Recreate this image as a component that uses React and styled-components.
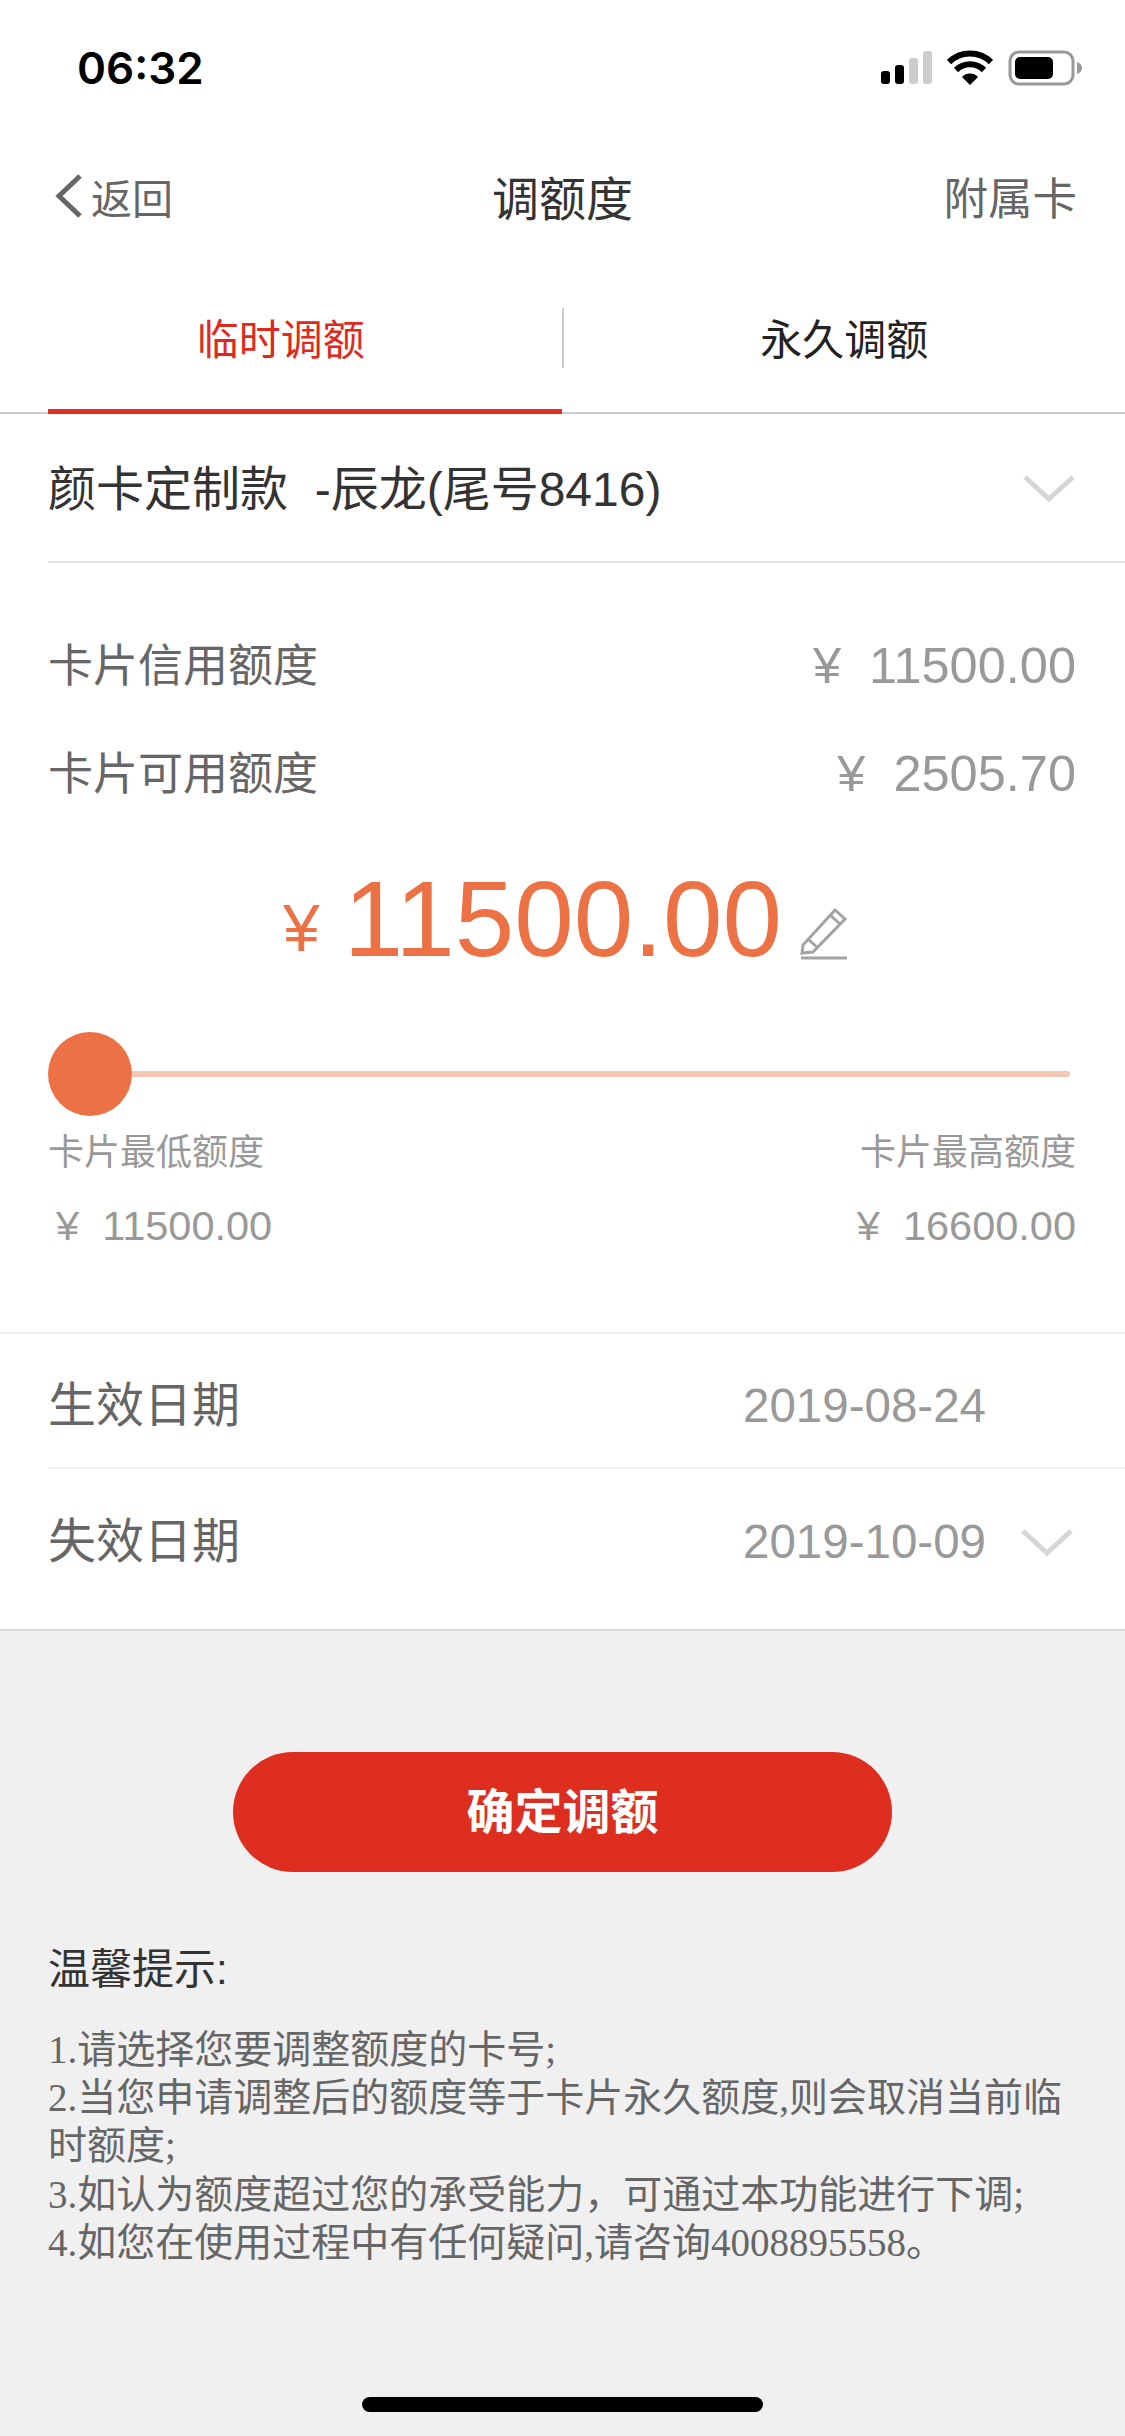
import styled, { createGlobalStyle } from "styled-components";

const Global = createGlobalStyle`
  html, body { margin: 0; padding: 0; background: #f0f0f0; }
  * { box-sizing: border-box; }
  body { font-family: "Liberation Sans", "Noto Sans CJK SC", sans-serif; }
`;

const Page = styled.div`
  width: 1125px;
  height: 2436px;
  position: relative;
  overflow: hidden;
  background: #f0f0f0;
`;
const White = styled.div`
  background: #fff;
  border-bottom: 2px solid #d9d9d9;
`;
const StatusBar = styled.div`
  height: 136px;
  padding: 0 42px 0 77px;
  display: flex;
  align-items: center;
  justify-content: space-between;
`;
const Time = styled.div`
  font-family: "Inter", sans-serif;
  font-weight: 600;
  font-size: 44px;
  color: #000;
`;
const NavBar = styled.div`
  height: 124px;
  padding: 0 48px 5px;
  display: grid;
  grid-template-columns: 1fr auto 1fr;
  align-items: center;
`;
const Back = styled.div`
  display: flex;
  align-items: center;
  gap: 9px;
  padding-left: 7px;
  font-size: 41px;
  color: #666;
`;
const NavTitle = styled.div`
  font-size: 47px;
  color: #333;
`;
const NavAction = styled.div`
  font-size: 44.5px;
  color: #666;
  text-align: right;
`;
const Tabs = styled.div`
  height: 154px;
  display: flex;
  border-bottom: 2px solid #ccc;
`;
const Tab = styled.div`
  position: relative;
  flex: 1;
  display: flex;
  align-items: center;
  justify-content: center;
  font-size: 42px;
  color: ${(p) => (p.$active ? "#e0281d" : "#222")};
  &::after {
    content: "";
    display: ${(p) => (p.$active ? "block" : "none")};
    position: absolute;
    left: 48px;
    right: 0;
    bottom: -2px;
    height: 5px;
    background: #df2f20;
  }
`;
const TabDivider = styled.div`
  width: 2px;
  height: 60px;
  margin-top: 48px;
  background: #ccc;
`;
const CardRow = styled.div`
  height: 149px;
  margin-left: 48px;
  padding-right: 50px;
  display: flex;
  align-items: center;
  justify-content: space-between;
  border-bottom: 2px solid #e3e3e3;
`;
const CardName = styled.div`
  font-size: 48px;
  margin-bottom: 6px;
  color: #333;
  white-space: pre;
`;
const Info = styled.div`
  padding: 48px 49px 0 48px;
`;
const InfoRow = styled.div`
  height: 108px;
  display: flex;
  align-items: center;
  justify-content: space-between;
`;
const InfoLabel = styled.div`
  font-size: 45px;
  margin-bottom: 6px;
  color: #666;
`;
const InfoValue = styled.div`
  font-size: 50.5px;
  color: #999;
  white-space: pre;
`;
const AmountRow = styled.div`
  height: 150px;
  margin-top: 17px;
  padding-left: 6px;
  display: flex;
  align-items: center;
  justify-content: center;
  color: #ec7144;
`;
const Yen = styled.span`
  font-size: 66px;
  margin: 18px 24px 0 0;
`;
const AmountValue = styled.span`
  font-size: 107px;
`;
const EditIcon = styled.svg`
  margin: 28px 0 0 18px;
`;
const Slider = styled.div`
  margin: 38px 55px 0 48px;
  height: 84px;
  display: flex;
  align-items: center;
`;
const Thumb = styled.div`
  width: 84px;
  height: 84px;
  border-radius: 50%;
  background: #ec7144;
  flex: none;
`;
const Track = styled.div`
  flex: 1;
  height: 6px;
  border-radius: 0 3px 3px 0;
  background: #f6c6b4;
`;
const Limits = styled.div`
  padding: 0 49px 0 48px;
  display: grid;
  grid-template-columns: 1fr 1fr;
  height: 218px;
  margin-top: -2px;
  grid-template-rows: 70px 84px;
  align-items: center;
  align-content: start;
`;
const LimitLabel = styled.div`
  font-size: 36px;
  color: #999;
  text-align: ${(p) => (p.$right ? "right" : "left")};
`;
const LimitValue = styled.div`
  font-size: 41.5px;
  color: #999;
  white-space: pre;
  text-align: ${(p) => (p.$right ? "right" : "left")};
  padding-left: ${(p) => (p.$right ? "0" : "8px")};
`;
const DateBlock = styled.div`
  border-top: 2px solid #efefef;
`;
const DateRow = styled.div`
  margin-left: 48px;
  height: ${(p) => p.$h}px;
  padding: ${(p) => p.$pad}px 52px 0 0;
  display: flex;
  align-items: ${(p) => (p.$last ? "flex-start" : "center")};
  border-bottom: ${(p) => (p.$last ? "none" : "2px solid #efefef")};
`;
const DateLabel = styled.div`
  flex: 1;
  font-size: 48px;
  line-height: 60px;
  color: #666;
`;
const DateValue = styled.div`
  font-size: 47.5px;
  line-height: 60px;
  color: #999;
  width: 245px;
  margin-right: 37px;
  white-space: nowrap;
`;
const ChevronSlot = styled.div`
  width: 48px;
  height: 60px;
  display: flex;
  align-items: center;
  justify-content: flex-end;
`;
const Footer = styled.div`
  padding: 121px 48px 0;
`;
const Confirm = styled.button`
  display: block;
  width: 659px;
  height: 120px;
  margin: 0 auto;
  padding: 0 0 9px;
  border: none;
  border-radius: 60px;
  background: #dd2e1f;
  color: #fff;
  font-family: inherit;
  font-size: 48px;
  font-weight: 700;
`;
const TipTitle = styled.div`
  margin-top: 68px;
  font-size: 42px;
  line-height: 60px;
  color: #333;
`;
const TipText = styled.div`
  margin-top: 26px;
  font-family: "Liberation Serif", "Noto Sans CJK SC", serif;
  font-size: 39px;
  line-height: 48.2px;
  color: #666;
`;
const HomeBar = styled.div`
  position: absolute;
  left: 362px;
  bottom: 24px;
  width: 401px;
  height: 15px;
  border-radius: 8px;
  background: #000;
`;

const Chevron = () => (
  <svg width="52" height="28" viewBox="0 0 52 28" fill="none" style={{ flex: "none" }}>
    <path d="M2 3l24 22L50 3" stroke="#d6d6d6" strokeWidth="5" />
  </svg>
);

const StatusIcons = () => (
  <svg width="202" height="36" viewBox="0 0 202 36">
    <rect x="0" y="21" width="9" height="13" rx="3" fill="#000" />
    <rect x="14" y="15" width="9" height="19" rx="3" fill="#000" />
    <rect x="28" y="8" width="9" height="26" rx="3" fill="#ccc" />
    <rect x="42" y="1" width="9" height="33" rx="3" fill="#ccc" />
    <path d="M68 12a30 30 0 0 1 42 0M75 20a20 20 0 0 1 28 0" stroke="#000" strokeWidth="6" fill="none" />
    <path d="M81 27a11 11 0 0 1 16 0l-8 8z" fill="#000" />
    <rect x="129" y="2" width="63" height="32" rx="9" fill="none" stroke="#999" strokeWidth="3" />
    <rect x="134" y="7" width="38" height="22" rx="5" fill="#000" />
    <path d="M196 12c3 1 5 3 5 6s-2 5-5 6z" fill="#999" />
  </svg>
);

export default function App() {
  return (
    <Page>
      <Global />
      <White>
        <StatusBar>
          <Time>06:32</Time>
          <StatusIcons />
        </StatusBar>
        <NavBar>
          <Back>
            <svg width="27" height="44" viewBox="0 0 27 44" fill="none">
              <path d="M25 2L4 22l21 20" stroke="#666" strokeWidth="5" />
            </svg>
            返回
          </Back>
          <NavTitle>调额度</NavTitle>
          <NavAction>附属卡</NavAction>
        </NavBar>
        <Tabs>
          <Tab $active>临时调额</Tab>
          <TabDivider />
          <Tab>永久调额</Tab>
        </Tabs>
        <CardRow>
          <CardName>颜卡定制款  -辰龙(尾号8416)</CardName>
          <Chevron />
        </CardRow>
        <Info>
          <InfoRow>
            <InfoLabel>卡片信用额度</InfoLabel>
            <InfoValue>¥  11500.00</InfoValue>
          </InfoRow>
          <InfoRow>
            <InfoLabel>卡片可用额度</InfoLabel>
            <InfoValue>¥  2505.70</InfoValue>
          </InfoRow>
        </Info>
        <AmountRow>
          <Yen>¥</Yen>
          <AmountValue>11500.00</AmountValue>
          <EditIcon width="48" height="54" viewBox="0 0 48 54" fill="none" stroke="#a3a3a3" strokeWidth="3">
            <path d="M3 39L35 4l10 9-32 33-11 1z" />
            <path d="M8 33l10 9M30 9l10 9" />
            <path d="M1 52h46" />
          </EditIcon>
        </AmountRow>
        <Slider>
          <Thumb />
          <Track />
        </Slider>
        <Limits>
          <LimitLabel>卡片最低额度</LimitLabel>
          <LimitLabel $right>卡片最高额度</LimitLabel>
          <LimitValue>¥  11500.00</LimitValue>
          <LimitValue $right>¥  16600.00</LimitValue>
        </Limits>
        <DateBlock>
          <DateRow $h={135} $pad={11}>
            <DateLabel>生效日期</DateLabel>
            <DateValue>2019-08-24</DateValue>
            <ChevronSlot />
          </DateRow>
          <DateRow $h={160} $pad={43} $last>
            <DateLabel>失效日期</DateLabel>
            <DateValue>2019-10-09</DateValue>
            <ChevronSlot>
              <Chevron />
            </ChevronSlot>
          </DateRow>
        </DateBlock>
      </White>
      <Footer>
        <Confirm>确定调额</Confirm>
        <TipTitle>温馨提示:</TipTitle>
        <TipText>
          1.请选择您要调整额度的卡号;
          <br />
          2.当您申请调整后的额度等于卡片永久额度,则会取消当前临时额度;
          <br />
          3.如认为额度超过您的承受能力，可通过本功能进行下调;
          <br />
          4.如您在使用过程中有任何疑问,请咨询4008895558。
        </TipText>
      </Footer>
      <HomeBar />
    </Page>
  );
}
